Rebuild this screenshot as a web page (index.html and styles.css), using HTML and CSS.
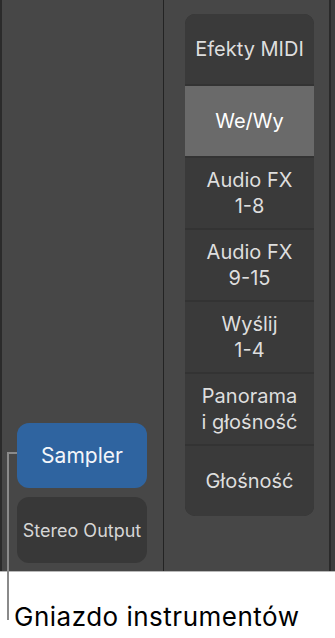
FILE: index.html
```html
<!DOCTYPE html>
<html>
<head>
<meta charset="utf-8">
<link rel="stylesheet" href="styles.css">
</head>
<body>
<div class="figure">
  <div class="mixer">
    <div class="strip-left">
      <div class="slots">
        <div class="slot slot-instrument">Sampler</div>
        <div class="slot slot-output">Stereo Output</div>
      </div>
    </div>
    <div class="strip-right">
      <div class="menu">
        <div class="menu-item">Efekty MIDI</div>
        <div class="menu-item active">We/Wy</div>
        <div class="menu-item">Audio FX<br>1-8</div>
        <div class="menu-item">Audio FX<br>9-15</div>
        <div class="menu-item">Wyślij<br>1-4</div>
        <div class="menu-item">Panorama<br>i głośność</div>
        <div class="menu-item">Głośność</div>
      </div>
    </div>
    <div class="edge"></div>
  </div>
  <div class="callout"></div>
  <div class="caption">Gniazdo instrumentów</div>
</div>
</body>
</html>
```
FILE: styles.css
```css
* { box-sizing: border-box; }
html, body { margin: 0; padding: 0; background: #fff; }
body { width: 335px; height: 638px; overflow: hidden; font-family: Inter, "Liberation Sans", sans-serif; }

.figure { position: relative; width: 335px; height: 638px; }

.mixer {
  display: flex;
  height: 572px;
  background: #474747;
  border-bottom: 1px solid #b8b8b8;
}

.strip-left {
  width: 164px;
  border-left: 2px solid #2b2b2b;
  border-right: 1px solid #232323;
  display: flex;
  flex-direction: column;
  justify-content: flex-end;
  padding: 0 16px 8px 15px;
}

.slots { display: flex; flex-direction: column; gap: 9px; }

.slot {
  height: 65px;
  border-radius: 12px;
  display: flex;
  align-items: center;
  justify-content: center;
  color: #e6e6e6;
}
.slot-instrument { background: #2f64a0; color: #f4f6fa; font-size: 21px; }
.slot-output { height: 66px; background: #383838; font-size: 18px; color: #d6d6d6; }

.strip-right {
  flex: 1;
  padding: 14px 0 0 21px;
}

.menu {
  width: 129px;
  display: flex;
  flex-direction: column;
  gap: 2px;
  background: #333;
  border-radius: 10px;
  overflow: hidden;
}

.menu-item {
  height: 70px;
  background: #3a3a3a;
  color: #dedede;
  font-size: 20px;
  line-height: 26px;
  text-align: center;
  display: flex;
  align-items: center;
  justify-content: center;
}
.menu-item.active { background: #6a6a6a; color: #fff; }

.edge {
  width: 6px;
  border-left: 2px solid #2a2a2a;
  background: #3e3e3e;
}

.callout {
  position: absolute;
  left: 7px;
  top: 452px;
  width: 10px;
  height: 168px;
  border-left: 2px solid #8a8a8a;
  border-top: 2px solid #8a8a8a;
}

.caption {
  padding: 30px 0 0 14px;
  font-size: 26px;
  letter-spacing: 0.5px;
  line-height: 30px;
  color: #000;
}
```
